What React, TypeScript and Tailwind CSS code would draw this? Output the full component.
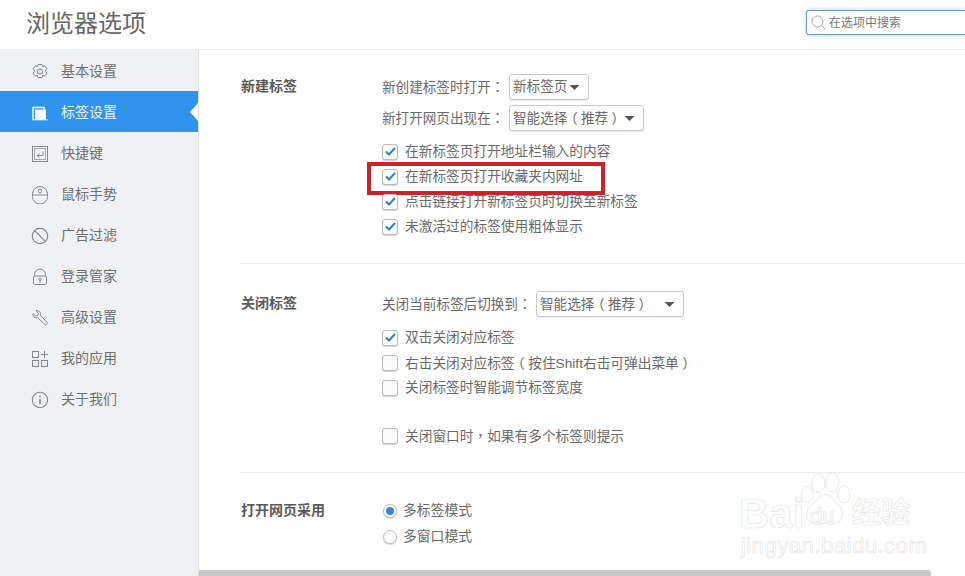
import type { ReactNode } from 'react';

const FONT = "font-['Liberation_Sans','Noto_Sans_CJK_SC',sans-serif]";

// the reference centres its full-width punctuation: half-width glyph plus even padding for brackets
function Text({ children }: { children: string }) {
  return (
    <>
      {children.split(/([：，（）])/).map((part, i) => {
        if (i % 2 === 0) return part;
        const bracket = part === '（' || part === '）';
        return (
          <span
            key={i}
            className={
              bracket
                ? "px-[0.25em] [font-feature-settings:'halt'] font-['Noto_Sans_CJK_SC',sans-serif]"
                : "font-['Noto_Sans_CJK_TC',sans-serif]"
            }
          >
            {part}
          </span>
        );
      })}
    </>
  );
}

function Svg({ children }: { children: ReactNode }) {
  return (
    <svg width="18" height="18" viewBox="0 0 18 18" fill="none" stroke="currentColor" strokeWidth="1" className="shrink-0">
      {children}
    </svg>
  );
}

const GearIcon = () => (
  <Svg>
    <path d="M7 1.5h4l.6 2.2 2-.9 2.4 3-1.4 1.7v1l1.4 1.7-2.4 3-2-.9-.6 2.2H7l-.6-2.2-2 .9-2.4-3 1.4-1.7v-1L2 5.8l2.4-3 2 .9z" />
    <circle cx="9" cy="8.5" r="2.6" />
  </Svg>
);
const TabIcon = () => (
  <Svg>
    <path d="M2 15.5V3.5h11v2" stroke="#fff" strokeWidth="1.4" />
    <path d="M1.5 15.7h15" stroke="#fff" strokeWidth="1.2" />
    <rect x="4" y="5.5" width="11" height="9.5" fill="#fff" stroke="none" />
  </Svg>
);
const KeyIcon = () => (
  <Svg>
    <rect x="1.5" y="1.5" width="15" height="15" />
    <rect x="3.5" y="3.5" width="11" height="11" strokeWidth="0.7" />
    <path d="M12 6.5v4H6.5M8.3 8.6l-2 2 2 2" />
  </Svg>
);
const MouseIcon = () => (
  <Svg>
    <path d="M1.5 8a7.5 7.5 0 0 1 15 0v2.5a7 7 0 0 1-15 0z" />
    <path d="M1.5 9h15" />
    <rect x="7.5" y="3" width="3" height="4" rx="1.5" />
  </Svg>
);
const BanIcon = () => (
  <Svg>
    <circle cx="9" cy="9" r="7.7" strokeWidth="1.2" />
    <path d="M3.6 3.6l10.8 10.8" strokeWidth="1.2" />
  </Svg>
);
const LockIcon = () => (
  <Svg>
    <path d="M3.5 8V6.5a5.5 5.5 0 0 1 11 0V8" />
    <rect x="2.5" y="8" width="13" height="8.5" rx="1" />
    <circle cx="9" cy="11.3" r="1.2" />
    <path d="M9 12.5v2" />
  </Svg>
);
const WrenchIcon = () => (
  <Svg>
    <path d="M2 4.5L4.6 7l2.2-.5.6-2.2L5 1.8c2.2-.9 4.6.8 4.4 3.2l-.1 1 6.7 7.3c1 1.3-.9 3.2-2.2 2.1L6.7 8.6 5.6 8.8C3.3 9 1.3 6.8 2 4.5z" />
  </Svg>
);
const AppsIcon = () => (
  <Svg>
    <rect x="1.5" y="1.5" width="6" height="6" />
    <rect x="1.5" y="10.5" width="6" height="6" />
    <rect x="10.5" y="10.5" width="6" height="6" />
    <path d="M13.5 1v7M10 4.5h7" />
  </Svg>
);
const InfoIcon = () => (
  <Svg>
    <circle cx="9" cy="9" r="7.7" strokeWidth="1.1" />
    <path d="M9 8v5" strokeWidth="1.6" />
    <path d="M9 4.8v1.6" strokeWidth="1.6" />
  </Svg>
);

const NAV_ITEMS = [
  { label: '基本设置', icon: GearIcon },
  { label: '标签设置', icon: TabIcon, active: true },
  { label: '快捷键', icon: KeyIcon },
  { label: '鼠标手势', icon: MouseIcon },
  { label: '广告过滤', icon: BanIcon },
  { label: '登录管家', icon: LockIcon },
  { label: '高级设置', icon: WrenchIcon },
  { label: '我的应用', icon: AppsIcon },
  { label: '关于我们', icon: InfoIcon },
];

function Select({ text, width, label }: { text: string; width: string; label: string }) {
  return (
    <div className="flex h-[26px] items-center">
      <span className="text-[13.6px] whitespace-nowrap">
        <Text>{label}</Text>
      </span>
      <div className={`${width} ml-auto flex h-[26px] shrink-0 items-center justify-between rounded-[3px] border border-[#c9c9c9] bg-white pl-[3px] pr-[8px] shadow-[0_1px_1px_rgba(0,0,0,0.08)]`}>
        <span className="text-[13.6px] whitespace-nowrap">
          <Text>{text}</Text>
        </span>
        <svg width="11" height="5" viewBox="0 0 11 5" className="shrink-0">
          <path d="M0.5 0h10L5.5 5z" fill="#555" />
        </svg>
      </div>
    </div>
  );
}

function Check({ label, checked, highlight }: { label: string; checked?: boolean; highlight?: boolean }) {
  return (
    <div className="relative flex h-[25px] items-center gap-[7px]">
      <span className="flex h-[16px] w-[16px] shrink-0 items-center justify-center rounded-[3px] border border-[#bcbcbc] bg-[#fbfbfb] shadow-[0_1px_1px_rgba(0,0,0,0.18)]">
        {checked && (
          <svg width="11" height="9" viewBox="0 0 11 9" fill="none" stroke="#2f85bd" strokeWidth="2">
            <path d="M1 4.5l3 3 6-6.5" />
          </svg>
        )}
      </span>
      <span className="pt-px text-[13.7px] whitespace-nowrap">
        <Text>{label}</Text>
      </span>
      {highlight && (
        <span className="absolute left-[-15px] top-[-2px] h-[33px] w-[238px] border-[4px] border-[#d2202a]" />
      )}
    </div>
  );
}

function Radio({ label, checked }: { label: string; checked?: boolean }) {
  return (
    <div className="flex h-[26px] items-center gap-[6px] pl-px">
      <span className="flex h-[14px] w-[14px] shrink-0 items-center justify-center rounded-full border border-[#bdbdbd] bg-[#fbfbfb] shadow-[0_1px_1px_rgba(0,0,0,0.18)]">
        {checked && <span className="h-[8px] w-[8px] rounded-full bg-[#3a87c0]" />}
      </span>
      <span className="pt-px text-[13.8px] whitespace-nowrap">{label}</span>
    </div>
  );
}

function Section({ title, children, className }: { title: string; children: ReactNode; className: string }) {
  return (
    <section className={`flex ${className}`}>
      <h2 className="w-[141px] shrink-0 text-[14px] leading-[24px] font-bold text-[#5a5a5a]">{title}</h2>
      <div className="flex-1">{children}</div>
    </section>
  );
}

function Watermark() {
  const outline = "text-transparent [-webkit-text-stroke:0.7px_#e6e6e6] font-['Liberation_Sans','Noto_Sans_CJK_SC',sans-serif]";
  return (
    <div className="pointer-events-none absolute left-[738px] top-[470px] h-[90px] w-[180px]">
      <span className={`${outline} absolute left-[1px] top-[25px] text-[42px] leading-[38px] font-bold`}>Bai</span>
      <svg width="52" height="58" viewBox="0 0 54 62" fill="none" stroke="#e6e6e6" className="absolute left-[61px] top-[2px]">
        <ellipse cx="20" cy="12" rx="7" ry="10" />
        <ellipse cx="35" cy="11" rx="7" ry="10" />
        <ellipse cx="8" cy="24" rx="6.5" ry="9" />
        <ellipse cx="47" cy="24" rx="6.5" ry="9" />
        <path d="M27 24c7 0 9 7 14 11 6 5 7 17-2 20-5 2-8 0-12 0s-8 2-13 0C5 52 6 40 13 35c5-4 7-11 14-11z" />
      </svg>
      <span className={`${outline} absolute left-[72px] top-[34px] text-[22px] leading-[24px]`}>du</span>
      <span className={`${outline} absolute left-[114px] top-[27px] text-[29px] leading-[32px] font-bold`}>经验</span>
      <span className={`${outline} absolute left-[3px] top-[63px] text-[22.5px] leading-[26px] tracking-[0.3px]`}>jingyan.baidu.com</span>
    </div>
  );
}

export default function App() {
  return (
    <div className={`${FONT} relative flex h-[576px] w-[965px] flex-col overflow-hidden bg-white text-[#6a6a6a]`}>
      {/* Header */}
      <header className="flex h-[50px] shrink-0 items-center justify-between border-b border-[#ececec] pl-[26px]">
        <h1 className="relative top-[-1px] text-[24px] leading-none font-normal text-[#666]">浏览器选项</h1>
        <div className="relative top-[-2px] flex h-[25px] w-[159px] items-center gap-[3px] rounded-l-[3px] border border-r-0 border-[#6b9cc4] pl-[4px] shadow-[0_0_4px_rgba(90,170,230,0.5)]">
          <svg width="15" height="15" viewBox="0 0 15 15" fill="none" stroke="#a9a9a9" strokeWidth="1" className="shrink-0">
            <circle cx="6.5" cy="6.5" r="5.5" />
            <path d="M10.5 10.5l4 4" />
          </svg>
          <span className="pt-px text-[12px] text-[#777]">在选项中搜索</span>
        </div>
      </header>

      <div className="flex min-h-0 flex-1">
        {/* Sidebar */}
        <nav className="w-[199px] shrink-0 border-r border-[#dcdfe5] bg-[#eff1f5]">
          {NAV_ITEMS.map(({ label, icon: Icon, active }) => (
            <div
              key={label}
              className={`relative flex h-[41px] items-center gap-[12px] pt-[2px] pl-[31px] text-[14px] ${
                active ? 'bg-[#3093ee] text-[#e6f6ff]' : 'text-[#6f6f6f]'
              }`}
            >
              <span className={active ? 'text-white' : 'text-[#85888d]'}>
                <Icon />
              </span>
              <span>{label}</span>
              {active && (
                <span className="absolute right-0 top-[12px] h-0 w-0 border-y-[9px] border-r-[8px] border-y-transparent border-r-white" />
              )}
            </div>
          ))}
        </nav>

        {/* Content */}
        <main className="flex min-w-0 flex-1 flex-col">
          <div className="min-h-0 flex-1 pl-[42px]">
            <Section title="新建标签" className="border-b border-[#ececec] pt-[24px] pb-[24px]">
              <div className="flex w-[262px] flex-col gap-[5px]">
                <div className="w-[207px]">
                  <Select label="新创建标签时打开：" text="新标签页" width="w-[80px]" />
                </div>
                <Select label="新打开网页出现在：" text="智能选择（推荐）" width="w-[135px]" />
              </div>
              <div className="mt-[8px]">
                <Check checked label="在新标签页打开地址栏输入的内容" />
                <Check checked highlight label="在新标签页打开收藏夹内网址" />
                <Check checked label="点击链接打开新标签页时切换至新标签" />
                <Check checked label="未激活过的标签使用粗体显示" />
              </div>
            </Section>
            <Section title="关闭标签" className="border-b border-[#ececec] pt-[27px] pb-[24px]">
              <div className="w-[302px]">
                <Select label="关闭当前标签后切换到：" text="智能选择（推荐）" width="w-[148px]" />
              </div>
              <div className="mt-[8px]">
                <Check checked label="双击关闭对应标签" />
                <Check label="右击关闭对应标签（按住Shift右击可弹出菜单）" />
                <Check label="关闭标签时智能调节标签宽度" />
                <div className="h-[23px]" />
                <Check label="关闭窗口时，如果有多个标签则提示" />
              </div>
            </Section>
            <Section title="打开网页采用" className="pt-[25px]">
              <Radio checked label="多标签模式" />
              <Radio label="多窗口模式" />
            </Section>
          </div>
          {/* Horizontal scrollbar */}
          <div className="h-[6px] w-[732px] shrink-0 rounded-tr-[3px] bg-[#c8c8c8]" />
        </main>
      </div>

      <Watermark />
    </div>
  );
}
